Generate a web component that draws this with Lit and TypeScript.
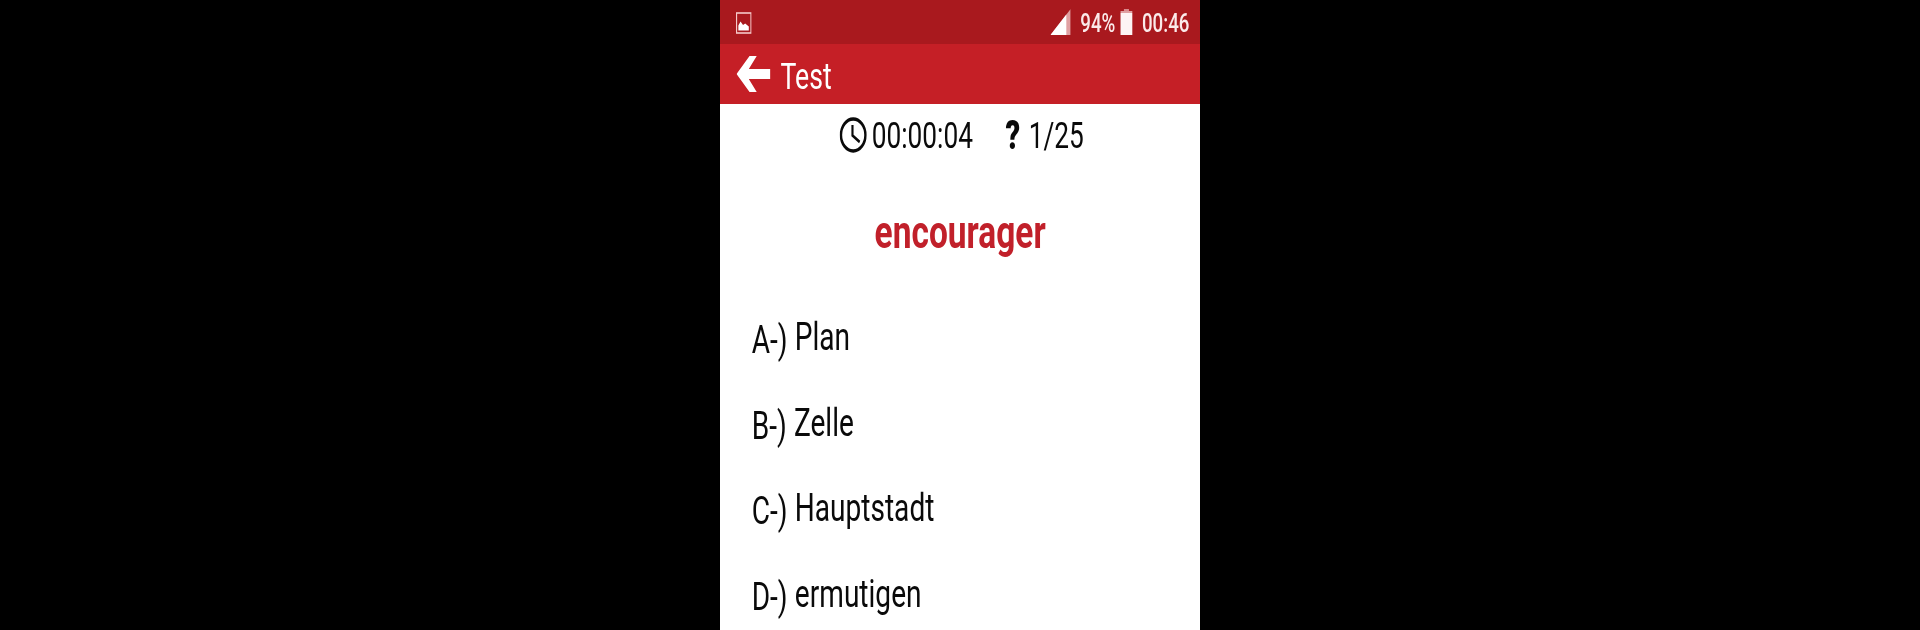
import { LitElement, html, css } from "lit";
import { customElement } from "lit/decorators.js";

const OPTIONS = [
  ["A-)", "Plan"],
  ["B-)", "Zelle"],
  ["C-)", "Hauptstadt"],
  ["D-)", "ermutigen"],
];

@customElement("app-root")
export class AppRoot extends LitElement {
  static styles = css`
    :host { display: block; width: 1920px; height: 630px; background: #000; overflow: hidden; font-family: Roboto, "Liberation Sans", sans-serif; }
    .stage { display: flex; justify-content: center; height: 630px; }
    .frame { width: 480px; height: 630px; overflow: hidden; background: #fff; }
    .screen { width: 667px; height: 630px; transform: scaleX(0.72); transform-origin: left top; display: flex; flex-direction: column; filter: blur(0.35px); }
    .status { height: 44px; background: #a9191e; color: #fbeaea; display: flex; align-items: center; padding: 0 15px 0 22px; flex: none; }
    .status .spacer { flex: 1; }
    .status .txt { font-size: 26px; font-weight: 500; line-height: 44px; margin-top: 2px; }
    .status .pic { margin-top: 1px; display: block; }
    .status .sig { margin-right: 13px; display: block; }
    .status .bat { margin: 0 13px 0 7px; display: block; }
    .bar { height: 60px; background: #c51f26; color: #fff; display: flex; align-items: center; padding-left: 23px; flex: none; }
    .bar svg { display: block; margin-right: 14px; }
    .bar .title { font-size: 37px; line-height: 60px; margin-top: 6px; }
    .meta { height: 52px; display: flex; justify-content: center; align-items: center; color: #0a0a0a; font-size: 36.5px; flex: none; padding: 10px 0 0 4px; box-sizing: border-box; }
    .meta svg { display: block; }
    .meta .clock { margin-right: 7px; }
    .meta .q { font-weight: 900; font-size: 40px; margin: 0 12px 0 45px; }
    .word { color: #c1202a; font-weight: 700; font-size: 46.5px; text-align: center; line-height: 60px; height: 60px; margin-top: 46px; flex: none; }
    .opts { display: flex; flex-direction: column; padding: 50px 0 0 44px; }
    .opt { height: 85.67px; display: flex; align-items: flex-start; font-size: 39px; line-height: 50px; color: #0a0a0a; }
    .opt .l { margin-top: 3px; margin-right: 10px; }
  `;

  render() {
    return html`<div class="stage"><div class="frame"><div class="screen">
      <div class="status">
        <svg class="pic" width="22" height="22" viewBox="0 0 22 22" aria-hidden="true">
          <rect x="1" y="1" width="20" height="20" fill="none" stroke="#f6c9c9" stroke-width="1.6"/>
          <path d="M3.5 18.5v-5l3-4 3.5 3.5 3-1.5 5 3v4z" fill="#fff"/>
        </svg>
        <div class="spacer"></div>
        <svg class="sig" width="28" height="26" viewBox="0 0 28 26" aria-hidden="true">
          <path d="M28 0V26H0z" fill="#e0a0a2"/>
          <path d="M22 5.6V26H0z" fill="#fff"/>
        </svg>
        <span class="txt">94%</span>
        <svg class="bat" width="17" height="26" viewBox="0 0 17 26" aria-hidden="true">
          <path d="M5 0h7v2h-7z" fill="#d98a8c"/>
          <path d="M0 2h17v2H0z" fill="#e0a0a2"/>
          <path d="M0 4h17v22H0z" fill="#fdf4f4"/>
        </svg>
        <span class="txt">00:46</span>
      </div>
      <div class="bar">
        <svg width="47" height="36" viewBox="0 0 47 36" aria-hidden="true">
          <path d="M18 0h10L17 13h30v10H17l11 13H18L0 18z" fill="#fff"/>
        </svg>
        <span class="title">Test</span>
      </div>
      <div class="meta">
        <svg class="clock" width="38" height="36" viewBox="0 0 38 36" aria-hidden="true">
          <ellipse cx="19" cy="18" rx="17" ry="16" fill="none" stroke="#0a0a0a" stroke-width="3.4"/>
          <path d="M18 8v10.5l10 6.5" fill="none" stroke="#0a0a0a" stroke-width="3"/>
        </svg>
        <span>00:00:04</span>
        <span class="q">?</span>
        <span>1/25</span>
      </div>
      <div class="word">encourager</div>
      <div class="opts">
        ${OPTIONS.map(([l, t]) => html`<div class="opt"><span class="l">${l}</span><span>${t}</span></div>`)}
      </div>
    </div></div></div>`;
  }
}
